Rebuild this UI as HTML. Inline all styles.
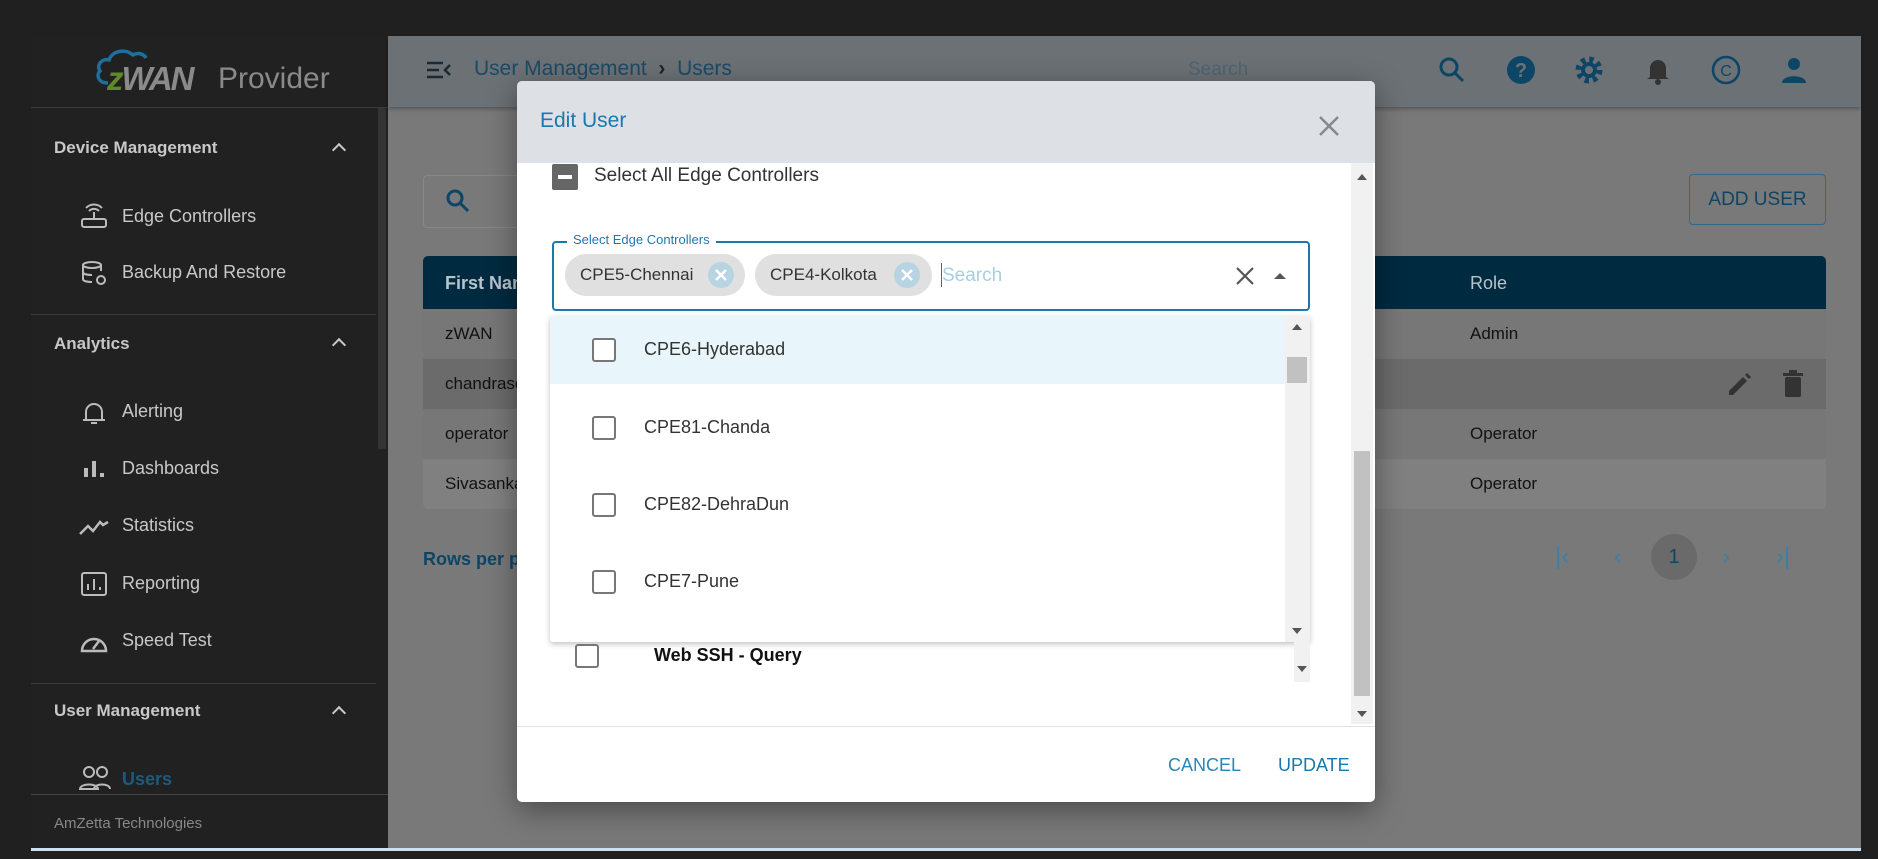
<!DOCTYPE html>
<html><head><meta charset="utf-8"><style>
*{margin:0;padding:0;box-sizing:border-box}
body{width:1878px;height:859px;background:#202020;position:relative;overflow:hidden;font-family:"Liberation Sans",sans-serif}
.a{position:absolute}
.side{left:31px;top:36px;width:357px;height:812px;background:#212121}
.st{color:#c8c8c8;font-weight:bold;font-size:17px}
.si{color:#c8c8c8;font-size:18px}
.div{height:1px;background:#3a3a3a;left:31px;width:345px}
.chev{width:10px;height:10px;border-left:2px solid #c8c8c8;border-top:2px solid #c8c8c8;transform:rotate(45deg)}
.main{left:388px;top:36px;width:1473px;height:812px;background:#797979}
.hdr{left:388px;top:36px;width:1473px;height:71px;background:#6c7175;box-shadow:0 2px 4px rgba(0,0,0,.3)}
.row{left:423px;width:1403px;height:50px;font-size:17px;color:#111}
.modal{left:517px;top:81px;width:858px;height:721px;background:#fff;border-radius:5px;box-shadow:0 8px 30px rgba(0,0,0,.4);overflow:hidden}
.cb{width:24px;height:24px;border:2px solid #777;border-radius:3px;background:#fff}
.it{font-size:18px;color:#333}
.chip{height:42px;border-radius:21px;background:#e0e0e0;font-size:17px;color:#333;padding-left:15px;line-height:42px}
.cx{position:absolute;top:8px;width:26px;height:26px;border-radius:13px;background:#b8d4e2}
.tri{width:0;height:0;border-left:5px solid transparent;border-right:5px solid transparent}
.pg{font-size:24px;color:#3d7fa6;font-weight:lighter}
</style></head><body>
<div class="a side"></div>
<svg class="a" style="left:94px;top:47px" width="70" height="38" viewBox="0 0 70 38" fill="none" stroke="#1f6f9c" stroke-width="3.5"><path d="M14 36C4 36 2 28 6 24c-4-6 2-13 9-11 3-9 16-12 24-5 5-3 11-1 13 3"/></svg>
<div class="a" style="left:107px;top:60px;font-size:33px;font-weight:bold;font-style:italic;color:#8a8a8a;letter-spacing:-2px"><span style="color:#5f8a25">z</span>WAN</div>
<div class="a" style="left:218px;top:62px;font-size:30px;color:#8a8a8a">Provider</div>
<div class="a div" style="top:107px;width:357px"></div>
<div class="a st" style="left:54px;top:138px">Device Management</div><div class="a chev" style="left:334px;top:145px"></div>
<div class="a si" style="left:122px;top:206px">Edge Controllers</div>
<div class="a si" style="left:122px;top:262px">Backup And Restore</div>
<svg class="a" style="left:80px;top:203px" width="28" height="28" viewBox="0 0 28 28" fill="none" stroke="#bbb" stroke-width="2"><rect x="2" y="16" width="24" height="8" rx="2"/><path d="M14 16V9M9 8a7 7 0 0 1 10 0M6 5a11 11 0 0 1 16 0"/></svg>
<svg class="a" style="left:80px;top:259px" width="28" height="28" viewBox="0 0 28 28" fill="none" stroke="#bbb" stroke-width="2"><ellipse cx="12" cy="6" rx="9" ry="3"/><path d="M3 6v14c0 2 4 3 9 3M21 6v6M3 13c0 2 4 3 9 3"/><circle cx="21" cy="21" r="4"/></svg>
<div class="a div" style="top:314px"></div>
<div class="a st" style="left:54px;top:334px">Analytics</div><div class="a chev" style="left:334px;top:340px"></div>
<div class="a si" style="left:122px;top:401px">Alerting</div>
<div class="a si" style="left:122px;top:458px">Dashboards</div>
<div class="a si" style="left:122px;top:515px">Statistics</div>
<div class="a si" style="left:122px;top:573px">Reporting</div>
<div class="a si" style="left:122px;top:630px">Speed Test</div>
<svg class="a" style="left:80px;top:399px" width="28" height="28" viewBox="0 0 28 28" fill="none" stroke="#bbb" stroke-width="2"><path d="M6 21V13a8 8 0 0 1 16 0v8M3 21h22M11 24h6"/></svg>
<svg class="a" style="left:80px;top:455px" width="28" height="28" viewBox="0 0 28 28" fill="#bbb"><rect x="4" y="13" width="4" height="9"/><rect x="12" y="6" width="4" height="16"/><rect x="20" y="18" width="4" height="4"/></svg>
<svg class="a" style="left:78px;top:512px" width="32" height="28" viewBox="0 0 32 28" fill="none" stroke="#bbb" stroke-width="2.5"><path d="M2 22l8-8 5 5 7-9 3 3 5-3"/></svg>
<svg class="a" style="left:80px;top:570px" width="28" height="28" viewBox="0 0 28 28" fill="none" stroke="#bbb" stroke-width="2"><rect x="2" y="3" width="24" height="22" rx="2"/><path d="M8 20v-6M14 20V9M20 20v-3"/></svg>
<svg class="a" style="left:78px;top:627px" width="32" height="28" viewBox="0 0 32 28" fill="none" stroke="#bbb" stroke-width="2.5"><path d="M4 24a12 12 0 1 1 24 0zM15 22l6-8"/></svg>
<div class="a div" style="top:683px"></div>
<div class="a st" style="left:54px;top:701px">User Management</div><div class="a chev" style="left:334px;top:708px"></div>
<svg class="a" style="left:78px;top:765px" width="34" height="26" viewBox="0 0 34 26" fill="none" stroke="#bbb" stroke-width="2"><circle cx="11" cy="7" r="5"/><circle cx="24" cy="7" r="5"/><path d="M2 24c0-6 18-6 18 0zM16 24c0-6 16-6 16 0"/></svg>
<div class="a" style="left:122px;top:769px;font-size:18px;font-weight:bold;color:#1e5a7c">Users</div>
<div class="a div" style="top:794px;width:357px;background:#444"></div>
<div class="a" style="left:54px;top:815px;font-size:15px;color:#888">AmZetta Technologies</div>
<div class="a" style="left:378px;top:108px;width:8px;height:341px;background:#333"></div>

<div class="a main"></div>
<div class="a hdr"></div>
<svg class="a" style="left:426px;top:60px" width="26" height="20" viewBox="0 0 26 20" stroke="#1e2a33" stroke-width="2.5" fill="none"><path d="M1 3h16M1 10h12M1 17h16M24 5l-5 5 5 5"/></svg>
<div class="a" style="left:474px;top:57px;font-size:21px;color:#1c4a66">User Management &nbsp;<b style="color:#222">›</b>&nbsp; Users</div>
<div class="a" style="left:1188px;top:59px;font-size:19px;color:#4f6472">Search</div>
<svg class="a" style="left:1438px;top:56px" width="28" height="28" viewBox="0 0 28 28" fill="none" stroke="#0d4566" stroke-width="3"><circle cx="11" cy="11" r="8"/><path d="M17 17l8 8"/></svg>
<svg class="a" style="left:1506px;top:55px" width="30" height="30" viewBox="0 0 30 30"><circle cx="15" cy="15" r="14" fill="#0d4566"/><text x="15" y="22" font-size="20" font-weight="bold" fill="#6c7175" text-anchor="middle" font-family="Liberation Sans">?</text></svg>
<svg class="a" style="left:1574px;top:55px" width="30" height="30" viewBox="0 0 30 30"><circle cx="15" cy="15" r="10" fill="none" stroke="#0d4566" stroke-width="7" stroke-dasharray="4 3.85"/><circle cx="15" cy="15" r="8" fill="#0d4566"/><circle cx="15" cy="15" r="4" fill="#6c7175"/></svg>
<svg class="a" style="left:1645px;top:55px" width="26" height="30" viewBox="0 0 26 30" fill="#333"><path d="M5 22V13a8 8 0 0 1 16 0v9l3 2H2z"/><circle cx="13" cy="27" r="3"/></svg>
<svg class="a" style="left:1711px;top:55px" width="30" height="30" viewBox="0 0 30 30"><circle cx="15" cy="15" r="13" fill="none" stroke="#0d4566" stroke-width="2.5"/><text x="15" y="21" font-size="16" fill="#0d4566" text-anchor="middle" font-family="Liberation Sans">C</text></svg>
<svg class="a" style="left:1780px;top:55px" width="28" height="30" viewBox="0 0 28 30" fill="#0d4566"><circle cx="14" cy="9" r="6"/><path d="M2 28c0-9 24-9 24 0z"/></svg>

<div class="a" style="left:423px;top:175px;width:900px;height:53px;border:1px solid #888;border-radius:4px"></div>
<svg class="a" style="left:445px;top:188px" width="26" height="26" viewBox="0 0 26 26" fill="none" stroke="#0d4566" stroke-width="3"><circle cx="10" cy="10" r="7"/><path d="M15 15l8 8"/></svg>
<div class="a" style="left:1689px;top:174px;width:137px;height:51px;border:1px solid #2f6a8a;border-radius:4px;color:#0d4566;font-size:19px;text-align:center;line-height:49px">ADD USER</div>
<div class="a" style="left:423px;top:256px;width:1403px;height:53px;background:#002a40;border-radius:5px 5px 0 0"></div>
<div class="a" style="left:445px;top:273px;color:#b8c4cc;font-size:18px;font-weight:bold">First Name</div>
<div class="a" style="left:1470px;top:273px;color:#b8c4cc;font-size:18px">Role</div>
<div class="a row" style="top:309px;background:#777"><span class="a" style="left:22px;top:15px">zWAN</span><span class="a" style="left:1047px;top:15px">Admin</span></div>
<div class="a row" style="top:359px;background:#6b6b6b"><span class="a" style="left:22px;top:15px">chandrasekar</span></div>
<div class="a row" style="top:409px;background:#777"><span class="a" style="left:22px;top:15px">operator</span><span class="a" style="left:1047px;top:15px">Operator</span></div>
<div class="a row" style="top:459px;background:#808080;border-radius:0 0 5px 5px"><span class="a" style="left:22px;top:15px">Sivasankar</span><span class="a" style="left:1047px;top:15px">Operator</span></div>
<svg class="a" style="left:1726px;top:372px" width="26" height="26" viewBox="0 0 26 26" fill="#333"><path d="M3 19l14-14 4 4-14 14H3zM19 3l2-2 4 4-2 2z"/></svg>
<svg class="a" style="left:1782px;top:370px" width="22" height="28" viewBox="0 0 22 28" fill="#333"><rect x="3" y="7" width="16" height="20" rx="2"/><rect x="1" y="3" width="20" height="3"/><rect x="7" y="0" width="8" height="3"/></svg>
<div class="a" style="left:423px;top:549px;font-size:18px;color:#0d4566;font-weight:bold">Rows per page</div>
<div class="a pg" style="left:1555px;top:543px">|‹</div>
<div class="a pg" style="left:1614px;top:543px">‹</div>
<div class="a" style="left:1651px;top:534px;width:46px;height:46px;border-radius:23px;background:#6a6a6a;color:#0d4566;font-size:20px;text-align:center;line-height:46px">1</div>
<div class="a pg" style="left:1722px;top:543px">›</div>
<div class="a pg" style="left:1776px;top:543px">›|</div>
<div class="a" style="left:31px;top:848px;width:1830px;height:3px;background:#cfe0ee"></div>

<div class="a modal">
 <div class="a" style="left:0;top:0;width:858px;height:82px;background:#dde1e5"></div>
 <div class="a" style="left:23px;top:28px;font-size:21px;color:#1b78ad">Edit User</div>
 <svg class="a" style="left:801px;top:34px" width="22" height="22" viewBox="0 0 22 22" stroke="#888" stroke-width="2.5"><path d="M2 2l18 18M20 2L2 20"/></svg>
 <div class="a" style="left:834px;top:82px;width:22px;height:561px;background:#f1f1f1"></div>
 <div class="a" style="left:837px;top:370px;width:16px;height:245px;background:#c1c1c1"></div>
 <div class="a tri" style="left:840px;top:93px;border-bottom:6px solid #555"></div>
 <div class="a tri" style="left:840px;top:630px;border-top:6px solid #555"></div>
 <div class="a" style="left:35px;top:83px;width:26px;height:26px;background:#666;border-radius:2px"><div style="margin:11px 6px;height:4px;background:#fff"></div></div>
 <div class="a" style="left:77px;top:84px;font-size:19px;color:#333">Select All Edge Controllers</div>
 <div class="a" style="left:35px;top:160px;width:758px;height:70px;border:2px solid #1b78ad;border-radius:4px"></div>
 <div class="a" style="left:50px;top:151px;padding:0 6px;background:#fff;font-size:13px;color:#1b78ad">Select Edge Controllers</div>
 <div class="a chip" style="left:48px;top:173px;width:180px">CPE5-Chennai<div class="cx" style="left:143px"><svg width="26" height="26" viewBox="0 0 26 26" stroke="#fff" stroke-width="2.5"><path d="M8 8l10 10M18 8L8 18"/></svg></div></div>
 <div class="a chip" style="left:238px;top:173px;width:177px">CPE4-Kolkota<div class="cx" style="left:139px"><svg width="26" height="26" viewBox="0 0 26 26" stroke="#fff" stroke-width="2.5"><path d="M8 8l10 10M18 8L8 18"/></svg></div></div>
 <div class="a" style="left:424px;top:182px;width:1px;height:24px;background:#1b78ad"></div>
 <div class="a" style="left:425px;top:184px;font-size:19px;color:#a8cee2">Search</div>
 <svg class="a" style="left:719px;top:186px" width="18" height="18" viewBox="0 0 18 18" stroke="#555" stroke-width="2.2"><path d="M1 1l16 16M17 1L1 17"/></svg>
 <div class="a tri" style="left:757px;top:192px;border-bottom:6px solid #555;border-left-width:6px;border-right-width:6px"></div>
 <div class="a" style="left:33px;top:235px;width:760px;height:326px;background:#fff;box-shadow:0 2px 6px rgba(0,0,0,.25);border-radius:3px;overflow:hidden">
  <div class="a" style="left:0;top:0;width:735px;height:68px;background:#e8f6fb"></div>
  <div class="a" style="left:735px;top:0;width:25px;height:326px;background:#f1f1f1"></div>
  <div class="a" style="left:737px;top:41px;width:20px;height:26px;background:#c1c1c1"></div>
  <div class="a tri" style="left:742px;top:8px;border-bottom:6px solid #555"></div>
  <div class="a tri" style="left:742px;top:312px;border-top:6px solid #555"></div>
  <div class="a cb" style="left:42px;top:22px"></div><div class="a it" style="left:94px;top:23px">CPE6-Hyderabad</div>
  <div class="a cb" style="left:42px;top:100px"></div><div class="a it" style="left:94px;top:101px">CPE81-Chanda</div>
  <div class="a cb" style="left:42px;top:177px"></div><div class="a it" style="left:94px;top:178px">CPE82-DehraDun</div>
  <div class="a cb" style="left:42px;top:254px"></div><div class="a it" style="left:94px;top:255px">CPE7-Pune</div>
 </div>
 <div class="a cb" style="left:58px;top:563px"></div>
 <div class="a" style="left:137px;top:564px;font-size:18px;color:#111;font-weight:bold">Web SSH - Query</div>
 <div class="a" style="left:777px;top:561px;width:16px;height:40px;background:#f1f1f1"></div>
 <div class="a tri" style="left:780px;top:585px;border-top:6px solid #555"></div>
 <div class="a" style="left:0;top:645px;width:858px;height:1px;background:#e0e0e0"></div>
 <div class="a" style="left:651px;top:674px;font-size:18px;color:#2a86b8">CANCEL</div>
 <div class="a" style="left:761px;top:674px;font-size:18px;color:#1b78ad">UPDATE</div>
</div>
</body></html>
